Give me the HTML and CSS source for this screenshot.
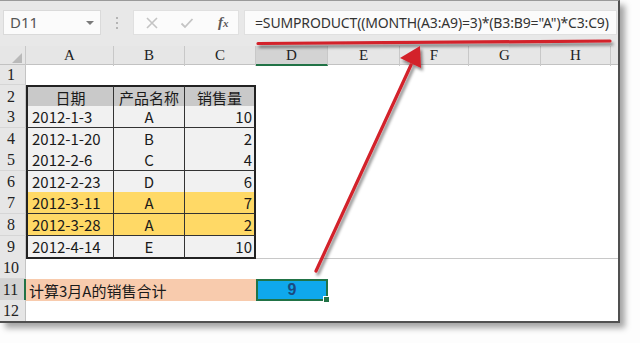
FILE: index.html
```html
<!DOCTYPE html>
<html lang="zh-CN">
<head>
    <meta charset="UTF-8">
    <meta name="viewport" content="width=device-width, initial-scale=1.0">
    <title>SUMPRODUCT</title>
    <link rel="stylesheet" href="styles.css">
</head>
<body>
    <div class="window">
        <div class="toolbar">
            <div class="namebox">D11<span class="drop"></span></div>
            <div class="dots"><i></i><i></i><i></i></div>
            <div class="fxbox">
                <svg class="ico" width="14" height="14" viewBox="0 0 14 14"><path d="M2 2 L12 12 M12 2 L2 12" stroke="#c4c4c4" stroke-width="1.6" fill="none"/></svg>
                <svg class="ico" width="14" height="14" viewBox="0 0 14 14"><path d="M1.5 7.5 L5 11 L12.5 3" stroke="#c4c4c4" stroke-width="1.8" fill="none"/></svg>
                <span class="fx">f<small>x</small></span>
            </div>
            <div class="formula">=SUMPRODUCT((MONTH(A3:A9)=3)*(B3:B9="A")*C3:C9)</div>
        </div>

        <div class="sheet">
            <div class="row head">
                <div class="corner"><span class="tri"></span></div>
                <div class="ch">A</div><div class="ch">B</div><div class="ch">C</div>
                <div class="ch sel">D</div><div class="ch">E</div><div class="ch">F</div>
                <div class="ch">G</div><div class="ch">H</div><div class="ch end"></div>
            </div>
            <div class="row r20"><div class="rh">1</div><div class="rest"></div></div>
            <div class="row r21">
                <div class="rh">2</div>
                <div class="c t top left th">日期</div>
                <div class="c t top th">产品名称</div>
                <div class="c t top right th">销售量</div>
                <div class="rest"></div>
            </div>
            <div class="row r22">
                <div class="rh">3</div>
                <div class="c t left lt">2012-1-3</div><div class="c t lt mid">A</div><div class="c t right lt num">10</div>
                <div class="rest"></div>
            </div>
            <div class="row r21">
                <div class="rh">4</div>
                <div class="c t left lt">2012-1-20</div><div class="c t lt mid">B</div><div class="c t right lt num">2</div>
                <div class="rest"></div>
            </div>
            <div class="row r22">
                <div class="rh">5</div>
                <div class="c t left lt">2012-2-6</div><div class="c t lt mid">C</div><div class="c t right lt num">4</div>
                <div class="rest"></div>
            </div>
            <div class="row r21">
                <div class="rh">6</div>
                <div class="c t left lt">2012-2-23</div><div class="c t lt mid">D</div><div class="c t right lt num">6</div>
                <div class="rest"></div>
            </div>
            <div class="row r22">
                <div class="rh">7</div>
                <div class="c t left yel">2012-3-11</div><div class="c t yel mid">A</div><div class="c t right yel num">7</div>
                <div class="rest"></div>
            </div>
            <div class="row r22">
                <div class="rh">8</div>
                <div class="c t left yel">2012-3-28</div><div class="c t yel mid">A</div><div class="c t right yel num">2</div>
                <div class="rest"></div>
            </div>
            <div class="row r21">
                <div class="rh">9</div>
                <div class="c t left bottom lt">2012-4-14</div><div class="c t bottom lt mid">E</div><div class="c t right bottom lt num">10</div>
                <div class="rest line"></div>
            </div>
            <div class="row r22"><div class="rh">10</div><div class="rest"></div></div>
            <div class="row r21">
                <div class="rh sel">11</div>
                <div class="c peach">计算3月A的销售合计</div>
                <div class="c active">9<span class="handle"></span></div>
                <div class="rest"></div>
            </div>
            <div class="row r22"><div class="rh">12</div><div class="rest"></div></div>
        </div>
    </div>

    <!-- red annotation drawn over the screenshot -->
    <svg class="marks" width="640" height="343" viewBox="0 0 640 343">
        <defs>
            <filter id="sh" x="-20%" y="-20%" width="140%" height="140%">
                <feDropShadow dx="2" dy="3" stdDeviation="1.6" flood-color="#000" flood-opacity="0.45"/>
            </filter>
        </defs>
        <g filter="url(#sh)">
            <path d="M258 43.5 L610 41" stroke="#d3202a" stroke-width="3.2" fill="none" stroke-linecap="round"/>
            <path d="M316 271 L411 65" stroke="#d3202a" stroke-width="3.2" fill="none" stroke-linecap="round"/>
            <polygon points="420,46 400,58 421,68" fill="#d3202a"/>
        </g>
    </svg>
</body>
</html>
```

FILE: styles.css
```css
body{
    margin: 0;
    background-color: #fdfdfd;
    width: 640px;
    height: 343px;
    overflow: hidden;
}

.window{
  width: 618px;
  height: 320px;
  border-top: 1px solid #9a9a9a;
  border-right: 2px solid #505050;
  border-bottom: 2px solid #505050;
  background-color: #fff;
  box-shadow: 5px 5px 6px rgba(0,0,0,0.35);
  overflow: hidden;
}

/* formula bar */
.toolbar{
  height: 45px;
  background-color: #e8e8e8;
  display: flex;
  align-items: flex-start;
  padding-top: 9px;
  padding-left: 3px;
  box-sizing: border-box;
  font-family: "Noto Sans", "Liberation Sans", sans-serif;
}
.toolbar > div{
  flex-shrink: 0;
}

.namebox{
  width: 98px;
  height: 25px;
  background-color: #fbfbfb;
  border: 1px solid #dadada;
  box-sizing: border-box;
  position: relative;
  font-size: 15px;
  line-height: 23px;
  color: #555;
  padding-left: 6px;
}

.drop{
  position: absolute;
  right: 6px;
  top: 10px;
  border-left: 4px solid transparent;
  border-right: 4px solid transparent;
  border-top: 4px solid #7a7a7a;
}

.dots{
  width: 32px;
  display: flex;
  flex-direction: column;
  align-items: center;
  gap: 3px;
  padding-top: 7px;
}
.dots i{
  width: 2px;
  height: 2px;
  background-color: #b4b4b4;
}

.fxbox{
  width: 106px;
  height: 25px;
  background-color: #fbfbfb;
  border: 1px solid #e0e0e0;
  box-sizing: border-box;
  display: flex;
  align-items: center;
  padding-left: 11px;
  gap: 21px;
}
.fx{
  font-family: "Liberation Serif", serif;
  font-style: italic;
  font-weight: bold;
  font-size: 15px;
  color: #5a5a5a;
  margin-left: 3px;
}
.fx small{
  font-size: 11px;
}

.formula{
  width: 373px;
  height: 25px;
  margin-left: 5px;
  background-color: #fbfbfb;
  border: 1px solid #e0e0e0;
  box-sizing: border-box;
  font-size: 14px;
  line-height: 23px;
  color: #333;
  padding-left: 10px;
  white-space: nowrap;
  overflow: hidden;
  letter-spacing: -0.15px;
}

/* grid */
.row{
  display: grid;
  grid-template-columns: 26px 88px 71px 71px 72px 72px 69px 72px 70px 7px;
}
.r20{ height: 20px; }
.r21{ height: 21px; }
.r22{ height: 22px; }

.head{
  height: 19px;
  background-color: #e6e6e6;
  border-bottom: 1px solid #c2c2c2;
  box-sizing: border-box;
}
.corner{
  position: relative;
  border-right: 1px solid #c8c8c8;
}
.tri{
  position: absolute;
  right: 3px;
  bottom: 3px;
  border-left: 10px solid transparent;
  border-bottom: 10px solid #b9b9b9;
}
.ch{
  border-right: 1px solid #c8c8c8;
  text-align: center;
  font-family: "Liberation Serif", serif;
  font-size: 15px;
  line-height: 19px;
  color: #222;
}
.ch.sel{
  background-color: #d3d3d3;
  border-bottom: 2px solid #217346;
  line-height: 18px;
}
.ch.end{
  border-right: none;
}

.rh{
  background-color: #e6e6e6;
  border-right: 1px solid #c4c4c4;
  border-bottom: 1px solid #d6d6d6;
  box-sizing: border-box;
  font-family: "Liberation Serif", serif;
  font-size: 16px;
  color: #222;
  display: flex;
  align-items: center;
  justify-content: center;
  padding-right: 3px;
}
.rh.sel{
  background-color: #d3d3d3;
  border-right: 2px solid #217346;
}

.rest{
  grid-column: span 6;
}
.rest.line{
  border-bottom: 1px solid #c8c8c8;
  box-sizing: border-box;
}

.c{
  box-sizing: border-box;
  font-family: "Noto Sans CJK SC", "Noto Sans", sans-serif;
  font-size: 15px;
  color: #1a1a1a;
  display: flex;
  align-items: center;
  padding: 0 4px;
  white-space: nowrap;
}
.t{
  border-right: 1px solid #333;
  border-bottom: 1px solid #333;
}
.top{ border-top: 2px solid #222; }
.left{ border-left: 2px solid #222; }
.right{ border-right: 2px solid #222; }
.bottom{ border-bottom: 2px solid #222; }

.th{
  background-color: #c9c9c9;
  justify-content: center;
}
.lt{ background-color: #f1f1f1; }
.yel{ background-color: #ffd966; }
.mid{ justify-content: center; }
.num{ justify-content: flex-end; padding-right: 2px; }

.peach{
  grid-column: span 3;
  background-color: #f8cbad;
  padding-left: 3px;
}
.active{
  position: relative;
  background-color: #0fa8ec;
  border: 2px solid #217346;
  justify-content: center;
  color: #1b4b80;
  font-family: "Liberation Sans", sans-serif;
  font-size: 16px;
  font-weight: bold;
}
.handle{
  position: absolute;
  right: -4px;
  bottom: -4px;
  width: 5px;
  height: 5px;
  background-color: #217346;
  border: 1px solid #fff;
}

.marks{
  position: absolute;
  left: 0;
  top: 0;
  pointer-events: none;
}
```
